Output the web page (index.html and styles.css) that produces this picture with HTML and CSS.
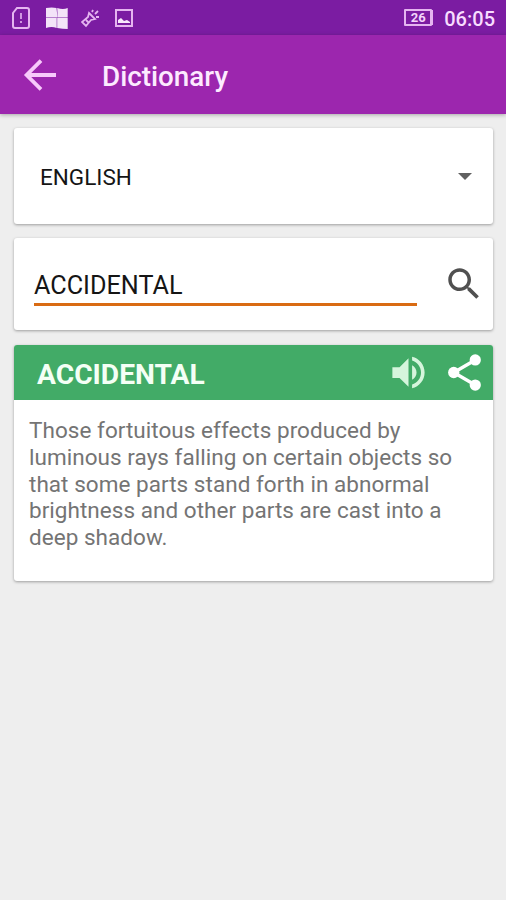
FILE: index.html
```html
<!DOCTYPE html>
<html lang="en">
<head>
<meta charset="utf-8">
<title>Dictionary</title>
<link rel="stylesheet" href="styles.css">
</head>
<body>
<header class="status">
  <div class="notices">
    <svg width="20" height="24" viewBox="0 0 20 24" fill="none" stroke="#e5b5f0" stroke-width="2"><path d="M6 2h10q2 0 2 2v16q0 2-2 2H4q-2 0-2-2V7z"/><path d="M10 7v6M10 15v2" stroke-width="1.6"/></svg>
    <svg class="windows" width="24" height="24" viewBox="0 0 24 24" fill="#f3e3f8"><path d="M1 2q6-1 10.500 0l1 9.500H1zM12.200 2q6 2 10.500 0v9.500H12.700zM1 12h10.700v10q-5-2-10.700 0zM12.200 12h10.500v11q-5 0-10.500-1z"/></svg>
    <svg class="torch" width="20" height="20" viewBox="0 0 20 20" fill="none" stroke="#e5b5f0" stroke-width="1.800"><path d="M8 5l6 6-4 1-5 6-4-4 6-5zM5 12l3 3M11 4l1-2M14 6l3-3M15 9l3 0"/></svg>
    <svg class="photo" width="20" height="20" viewBox="0 0 20 20"><path d="M2 2h16v16H2z" fill="none" stroke="#e5b5f0" stroke-width="2"/><path d="M4 15v-3l3-2 3 3 3-1 3 2v1z" fill="#f8e9fc"/></svg>
  </div>
  <div class="battery"><span>26</span></div>
  <time>06:05</time>
</header>
<nav class="appbar">
  <svg width="48" height="48" viewBox="0 0 24 24" fill="none" stroke="#f7c9fb" stroke-width="1.900"><path d="M20 12H5.500M12.500 4.800L5.300 12l7.200 7.200"/></svg>
  <h1>Dictionary</h1>
</nav>
<main>
  <section class="card language"><span>ENGLISH</span><i class="caret"></i></section>
  <section class="card search">
    <div class="field"><span>ACCIDENTAL</span></div>
    <svg width="42" height="42" viewBox="0 0 24 24" fill="#505050"><path d="M15.500 14h-.79l-.28-.27C15.410 12.590 16 11.110 16 9.500 16 5.910 13.090 3 9.500 3S3 5.910 3 9.500 5.910 16 9.500 16c1.610 0 3.090-.59 4.230-1.570l.27.28v.79l5 4.990L20.490 19l-4.990-5zm-6 0C7.010 14 5 11.990 5 9.500S7.010 5 9.500 5 14 7.010 14 9.500 11.990 14 9.500 14z"/></svg>
  </section>
  <section class="card result">
    <div class="result-head">
      <h2>ACCIDENTAL</h2>
      <svg width="43" height="43" viewBox="0 0 24 24" fill="#d5f5dc"><path d="M3 9v6h4l5 5V4L7 9H3zm13.500 3c0-1.770-1.020-3.290-2.500-4.030v8.050c1.480-.73 2.500-2.250 2.500-4.020zM14 3.230v2.060c2.890.86 5 3.540 5 6.710s-2.110 5.850-5 6.710v2.060c4.010-.91 7-4.490 7-8.770s-2.990-7.860-7-8.770z"/></svg>
      <svg class="share" width="43" height="43" viewBox="0 0 24 24" fill="#fff"><path d="M18 5L6 12l12 7" fill="none" stroke="#fff" stroke-width="1.900"/><circle cx="18" cy="5" r="3.150"/><circle cx="6" cy="12" r="3.150"/><circle cx="18" cy="19" r="3.150"/></svg>
    </div>
    <p>Those fortuitous effects produced by<br>luminous rays falling on certain objects so<br>that some parts stand forth in abnormal<br>brightness and other parts are cast into a<br>deep shadow.</p>
  </section>
</main>
</body>
</html>
```
FILE: styles.css
```css
* { box-sizing: border-box; }
body { margin: 0; min-height: 900px; background: #eee; font-family: Roboto, sans-serif; }
h1, h2, p { margin: 0; }
svg { display: block; flex: none; }
.status { height: 35px; background: #7b1ca2; display: flex; align-items: center; padding: 0 11px; }
.notices { display: flex; align-items: center; flex: 1; }
.windows { margin-left: 14px; }
.torch { margin-left: 12px; }
.photo { margin-left: 13px; }
.battery { width: 28px; height: 17px; border: 2px solid #e5b5f0; border-radius: 1px; display: flex; align-items: center; justify-content: center; font-size: 13px; font-weight: 700; line-height: 1; color: #f3d3fa; box-shadow: 2px 0 0 -1px #e5b5f0; margin-right: 12px; }
time { font-size: 20px; font-weight: 500; line-height: 35px; color: #f8dcff; padding-top: 3px; }
.appbar { height: 79px; background: #9c26ae; display: flex; align-items: center; padding-left: 16px; box-shadow: 0 1px 4px rgba(0,0,0,.3); }
.appbar h1 { margin-left: 38px; padding-top: 5px; font-size: 27.800px; font-weight: 500; line-height: 32px; color: #fdeaff; }
main { display: flex; flex-direction: column; gap: 14px; padding: 14px 13px 0 14px; }
.card { background: #fff; border-radius: 3px; box-shadow: 0 1px 3px rgba(0,0,0,.35); }
.language { height: 96px; display: flex; align-items: center; justify-content: space-between; padding: 2px 21px 0 26px; font-size: 22.500px; color: #151515; }
.caret { border: 7px solid transparent; border-top-color: #606060; border-bottom: 0; margin-bottom: 2px; }
.search { height: 92px; display: flex; align-items: flex-start; justify-content: space-between; padding: 25px 8px 0 20px; }
.field { width: 383px; height: 43px; border-bottom: 3px solid #d96b13; font-size: 25.200px; line-height: 46px; color: #151515; }
.result { height: 236px; overflow: hidden; margin-top: 1px; }
.result-head { height: 55px; background: #42ab67; display: flex; align-items: center; padding: 0 7px 0 23px; }
.result-head h2 { flex: 1; font-size: 28.200px; font-weight: 700; line-height: 34px; padding-top: 4px; color: #f4fff5; }
.share { margin-left: 13px; }
.result p { padding: 17.200px 0 0 15px; font-size: 22.500px; line-height: 26.700px; color: #747474; letter-spacing: .04px; white-space: nowrap; }
```
